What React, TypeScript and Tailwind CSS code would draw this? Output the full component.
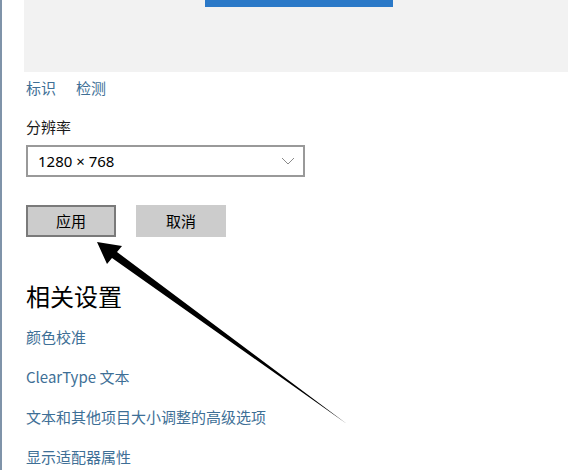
import React from 'react';

const cjk = { fontFamily: '"Noto Sans CJK SC", "Noto Sans", sans-serif' };
const latin = { fontFamily: '"Noto Sans", "Noto Sans CJK SC", sans-serif' };

const links = ['颜色校准', 'ClearType 文本', '文本和其他项目大小调整的高级选项', '显示适配器属性'];

export default function App() {
  return (
    <div className="relative w-[568px] h-[470px] overflow-hidden bg-white" style={cjk}>
      <div className="h-full border-l-2 border-[#7f93a9] pl-[22px]">
        {/* preview panel */}
        <div className="h-[72px] bg-[#f2f2f2]">
          <div className="ml-[181px] w-[188px] h-[7px] bg-[#2b79c8]" />
        </div>

        <div className="pl-[2px]">
          <div className="mt-[6px] flex gap-5 text-[15px] leading-5 text-[#3e6f96]">
            <span>标识</span>
            <span>检测</span>
          </div>

          <div className="mt-[19px] text-[15px] leading-5 text-[#1a1a1a]">分辨率</div>

          <div className="mt-2 w-[279px] h-[32px] border-2 border-[#999999] flex items-center justify-between pl-[10px] pr-[8px]">
            <span className="text-[15px] text-black" style={latin}>1280 × 768</span>
            <svg width="14" height="8" viewBox="0 0 14 8" fill="none">
              <polyline points="1,1 7,7 13,1" stroke="#8a8a8a" strokeWidth="1" />
            </svg>
          </div>

          <div className="mt-[28px] flex gap-5">
            <button className="w-[90px] h-[32px] bg-[#cccccc] border-2 border-[#7a7a7a] text-[15px] text-black">
              应用
            </button>
            <button className="w-[90px] h-[32px] bg-[#cccccc] text-[15px] text-black">取消</button>
          </div>

          <div className="mt-[43px] text-[24px] leading-8 text-black">相关设置</div>

          <div className="mt-[15px] flex flex-col gap-5 text-[15px] leading-5 text-[#3e6f96]">
            {links.map((l) => (
              <span key={l}>{l}</span>
            ))}
          </div>
        </div>
      </div>

      {/* annotation arrow */}
      <svg className="absolute inset-0 pointer-events-none" width="568" height="470" viewBox="0 0 568 470">
        <polygon points="97,242 122,246 117,252 347,424 112,258 107,264" fill="#000" />
      </svg>
    </div>
  );
}
